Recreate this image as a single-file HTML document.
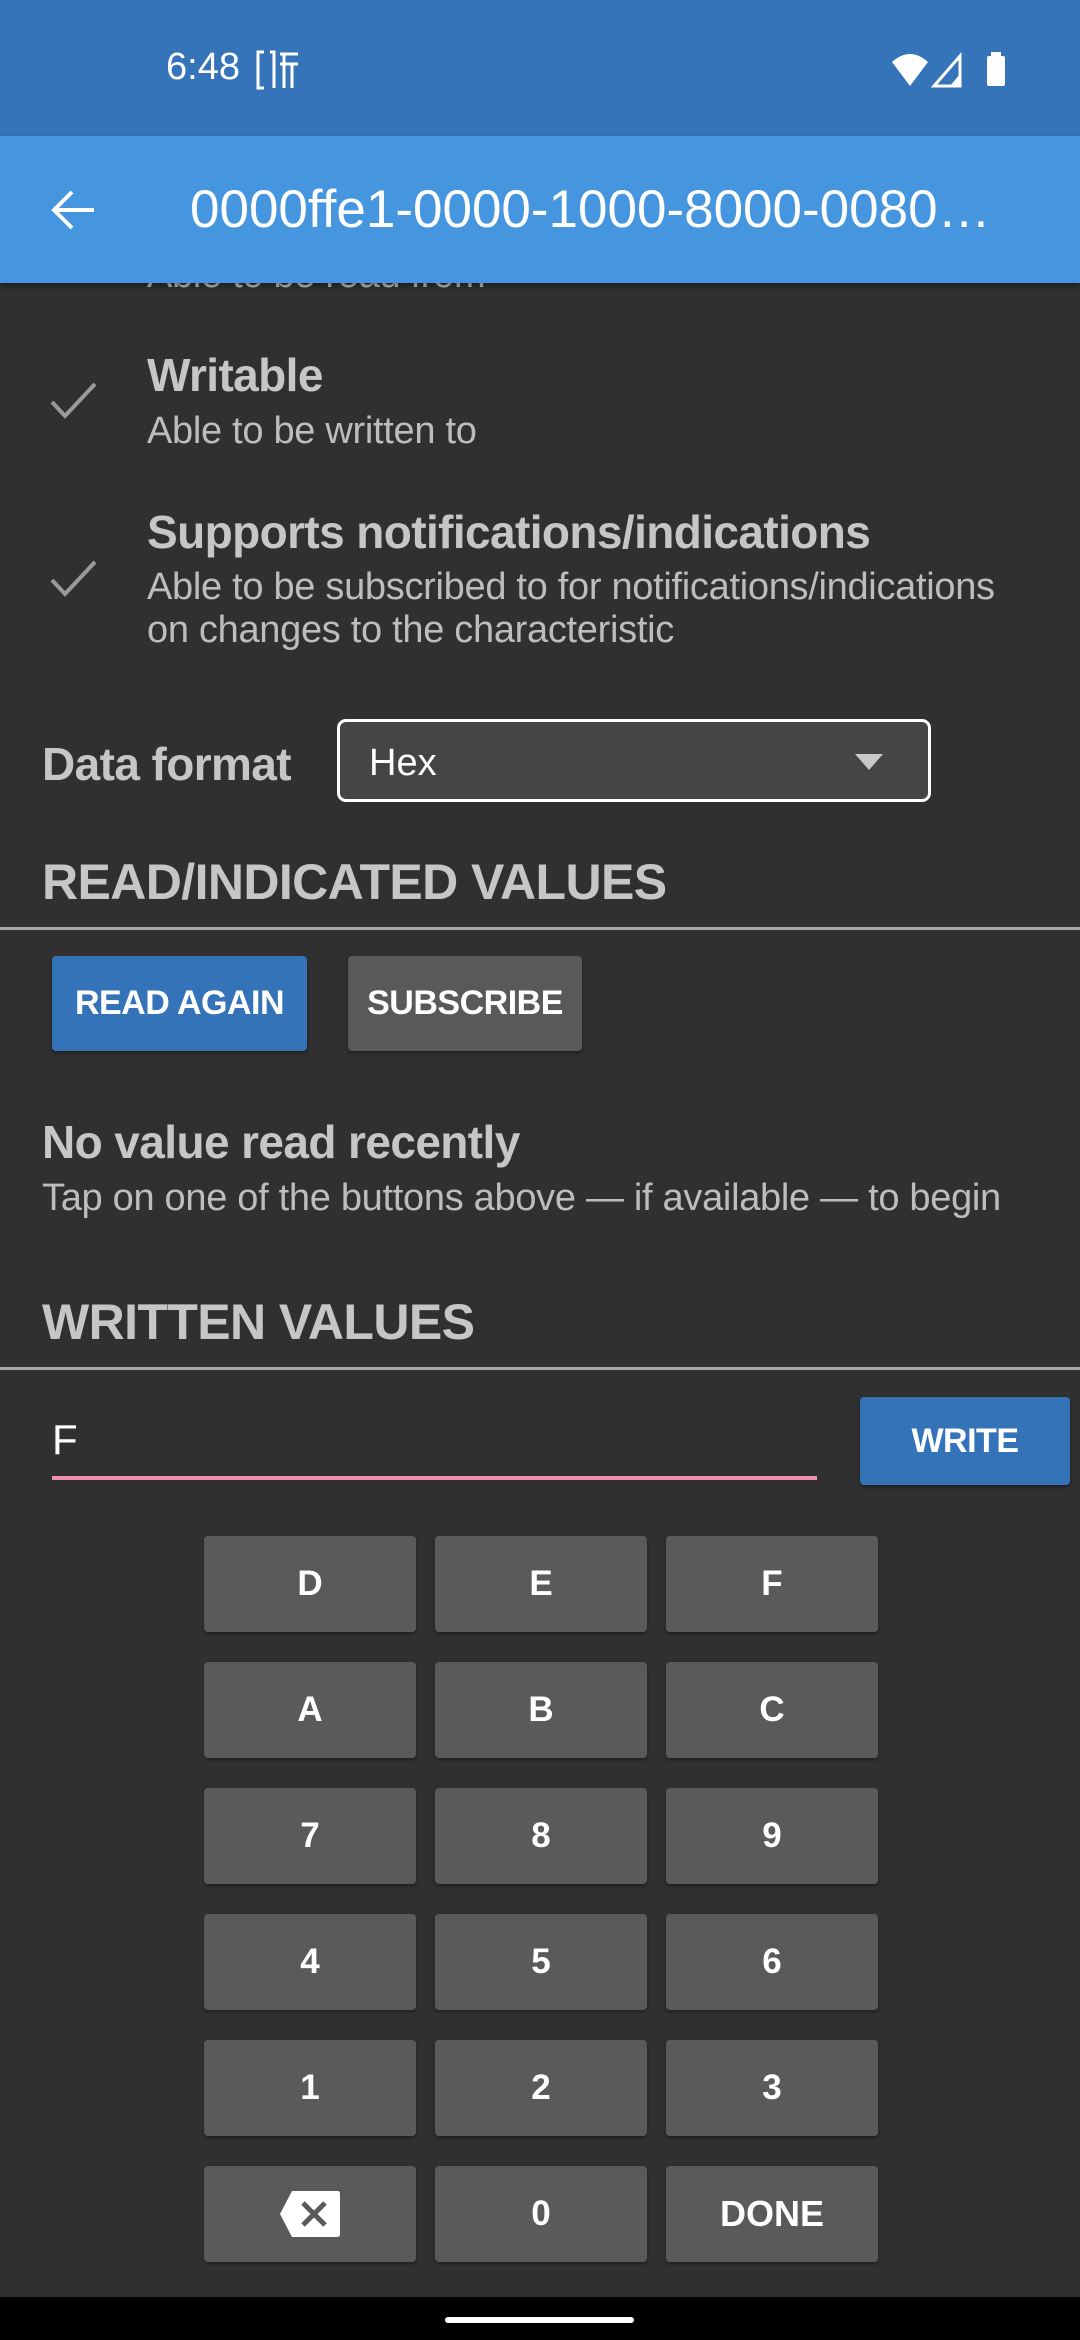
<!DOCTYPE html>
<html><head><meta charset="utf-8"><style>
*{margin:0;padding:0;box-sizing:border-box}
body{width:1080px;height:2340px;background:#303030;font-family:"Liberation Sans",sans-serif;position:relative;overflow:hidden;color:#c4c4c4}
.a{position:absolute;white-space:nowrap}
.sb{left:0;top:0;width:1080px;height:136px;background:#3574b8}
.ab{left:0;top:136px;width:1080px;height:147px;background:#4596de;box-shadow:0 3px 6px rgba(0,0,0,.4);z-index:2}
.t{font-weight:bold;font-size:46px;letter-spacing:-0.6px;color:#c6c6c6}
.s{font-size:38px;letter-spacing:-0.3px;color:#bdbdbd}
.h{font-weight:bold;font-size:50px;letter-spacing:-0.6px;color:#c6c6c6}
.btn{position:absolute;border-radius:4px;color:#fff;font-weight:bold;font-size:34px;letter-spacing:-0.5px;display:flex;align-items:center;justify-content:center;box-shadow:0 2px 3px rgba(0,0,0,.4)}
.k{position:absolute;width:212px;height:96px;background:#5a5a5b;border-radius:4px;color:#fff;font-size:35px;font-weight:bold;display:flex;align-items:center;justify-content:center;box-shadow:0 2px 3px rgba(0,0,0,.35)}
.line{position:absolute;left:0;width:1080px;height:3px;background:#a8a8a8}
</style></head><body>
<div class="a sb"></div>
<div class="a" style="left:166px;top:46px;font-size:38px;color:#fff">6:48</div>
<svg class="a" style="left:254px;top:50px" width="46" height="40" viewBox="0 0 46 40" fill="none" stroke="#fff" stroke-width="3">
<path d="M10 2 H4 V38 H10"/><path d="M16 2 H20 V38"/><path d="M26 4 H44 M30 4 V38 M38 14 V38 M26 14 H44"/></svg>
<svg class="a" style="left:890px;top:50px" width="120" height="40" viewBox="0 0 120 40">
<path d="M2 12 Q20 -4 38 12 L20 36 Z" fill="#fff"/>
<path d="M44 36 L70 6 L70 36 Z" fill="none" stroke="#fff" stroke-width="3"/>
<path d="M60 36 L70 24 L70 36Z" fill="#fff"/>
<rect x="97" y="6" width="18" height="30" rx="2" fill="#fff"/><rect x="101" y="2" width="10" height="5" fill="#fff"/>
</svg>
<div class="a ab"></div>
<svg class="a" style="left:50px;top:190px;z-index:3" width="46" height="40" viewBox="0 0 46 40"><path d="M44 20 H4 M22 2 L4 20 L22 38" fill="none" stroke="#fff" stroke-width="4"/></svg>
<div class="a" style="left:190px;top:179px;font-size:53px;color:#fff;z-index:3;letter-spacing:0">0000ffe1-0000-1000-8000-0080…</div>
<div class="a s" style="left:147px;top:254px">Able to be read from</div>

<svg class="a" style="left:50px;top:380px" width="50" height="40" viewBox="0 0 50 40"><path d="M2 22 L15 36 L45 4" fill="none" stroke="#9a9a9a" stroke-width="4"/></svg>
<div class="a t" style="left:147px;top:348px">Writable</div>
<div class="a s" style="left:147px;top:410px">Able to be written to</div>
<svg class="a" style="left:50px;top:558px" width="50" height="40" viewBox="0 0 50 40"><path d="M2 22 L15 36 L45 4" fill="none" stroke="#9a9a9a" stroke-width="4"/></svg>
<div class="a t" style="left:147px;top:505px">Supports notifications/indications</div>
<div class="a s" style="left:147px;top:566px">Able to be subscribed to for notifications/indications</div>
<div class="a s" style="left:147px;top:609px">on changes to the characteristic</div>

<div class="a t" style="left:42px;top:737px">Data format</div>
<div class="a" style="left:337px;top:719px;width:594px;height:83px;background:#444547;border:3px solid #fff;border-radius:9px"></div>
<div class="a" style="left:369px;top:742px;font-size:38px;color:#fff">Hex</div>
<svg class="a" style="left:855px;top:754px" width="28" height="16"><path d="M0 0 H28 L14 16Z" fill="#c8c8c8"/></svg>

<div class="a h" style="left:42px;top:853px">READ/INDICATED VALUES</div>
<div class="line" style="top:927px"></div>
<div class="btn" style="left:52px;top:956px;width:255px;height:95px;background:#3573b9">READ AGAIN</div>
<div class="btn" style="left:348px;top:956px;width:234px;height:95px;background:#59595b">SUBSCRIBE</div>
<div class="a t" style="left:42px;top:1115px">No value read recently</div>
<div class="a s" style="left:42px;top:1177px">Tap on one of the buttons above — if available — to begin</div>
<div class="a h" style="left:42px;top:1293px">WRITTEN VALUES</div>
<div class="line" style="top:1367px"></div>

<div class="a" style="left:52px;top:1416px;font-size:42px;color:#fff">F</div>
<div class="a" style="left:52px;top:1476px;width:765px;height:4px;background:#f090ad"></div>
<div class="btn" style="left:860px;top:1397px;width:210px;height:88px;background:#3573b9">WRITE</div>

<div class="k" style="left:204px;top:1536px">D</div><div class="k" style="left:435px;top:1536px">E</div><div class="k" style="left:666px;top:1536px">F</div>
<div class="k" style="left:204px;top:1662px">A</div><div class="k" style="left:435px;top:1662px">B</div><div class="k" style="left:666px;top:1662px">C</div>
<div class="k" style="left:204px;top:1788px">7</div><div class="k" style="left:435px;top:1788px">8</div><div class="k" style="left:666px;top:1788px">9</div>
<div class="k" style="left:204px;top:1914px">4</div><div class="k" style="left:435px;top:1914px">5</div><div class="k" style="left:666px;top:1914px">6</div>
<div class="k" style="left:204px;top:2040px">1</div><div class="k" style="left:435px;top:2040px">2</div><div class="k" style="left:666px;top:2040px">3</div>
<div class="k" style="left:204px;top:2166px"><svg width="60" height="46" viewBox="0 0 60 46"><path d="M12 0 H58 Q60 0 60 3 V43 Q60 46 57 46 H12 L0 23Z" fill="#fff"/><path d="M23 12 L45 34 M45 12 L23 34" stroke="#5a5a5b" stroke-width="5"/></svg></div>
<div class="k" style="left:435px;top:2166px">0</div><div class="k" style="left:666px;top:2166px;font-size:36px">DONE</div>

<div class="a" style="left:0;top:2297px;width:1080px;height:43px;background:#000"></div>
<div class="a" style="left:445px;top:2317px;width:189px;height:6px;border-radius:3px;background:#fff"></div>
</body></html>
